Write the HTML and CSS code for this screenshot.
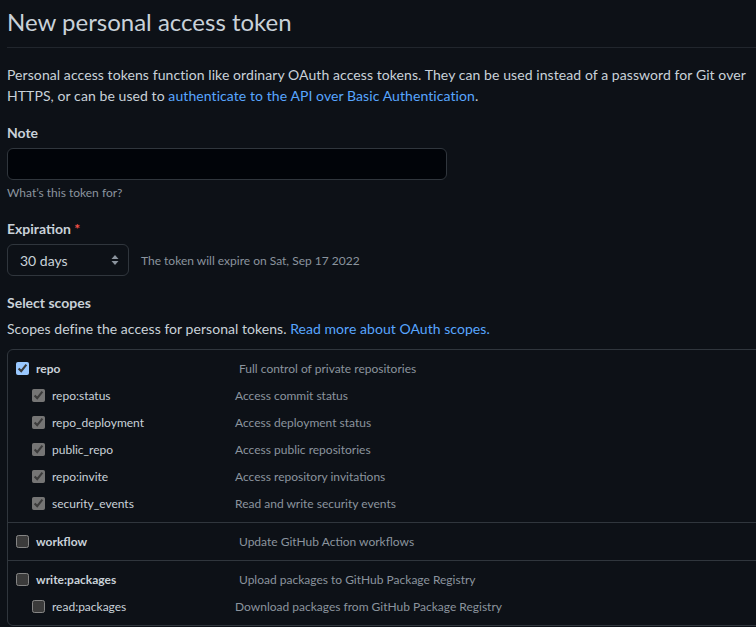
FILE: index.html
```html
<!DOCTYPE html>
<html lang="en">
<head>
    <meta charset="UTF-8">
    <meta name="viewport" content="width=device-width, initial-scale=1.0">
    <title>New personal access token</title>
    <link rel="stylesheet" href="styles.css">
</head>
<body>
    <div class="page">
        <h1 class="title">New personal access token</h1>
        <p class="intro">Personal access tokens function like ordinary OAuth access tokens. They can be used instead of a password for Git over HTTPS, or can be used to <a href="#">authenticate to the API over Basic Authentication</a>.</p>

        <div class="field">
            <label class="label" for="note">Note</label>
            <input class="text-input" type="text" id="note">
            <p class="hint">What’s this token for?</p>
        </div>

        <div class="field">
            <label class="label">Expiration <span class="req">*</span></label>
            <div class="expire-row">
                <div class="select">
                    <span>30 days</span>
                    <svg width="8" height="12" viewBox="0 0 8 12"><path d="M4 1 L7.5 5 H0.5 Z M4 11 L0.5 7 H7.5 Z" fill="#8b949e"/></svg>
                </div>
                <span class="expire-note">The token will expire on Sat, Sep 17 2022</span>
            </div>
        </div>

        <div class="field">
            <div class="label">Select scopes</div>
            <p class="scopes-intro">Scopes define the access for personal tokens. <a href="#">Read more about OAuth scopes.</a></p>
        </div>

        <div class="scopes">
            <div class="scope-group">
                <div class="scope top">
                    <label class="scope-name"><input type="checkbox" checked>repo</label>
                    <span class="scope-desc">Full control of private repositories</span>
                </div>
                <div class="scope sub">
                    <label class="scope-name"><input type="checkbox" checked disabled>repo:status</label>
                    <span class="scope-desc">Access commit status</span>
                </div>
                <div class="scope sub">
                    <label class="scope-name"><input type="checkbox" checked disabled>repo_deployment</label>
                    <span class="scope-desc">Access deployment status</span>
                </div>
                <div class="scope sub">
                    <label class="scope-name"><input type="checkbox" checked disabled>public_repo</label>
                    <span class="scope-desc">Access public repositories</span>
                </div>
                <div class="scope sub">
                    <label class="scope-name"><input type="checkbox" checked disabled>repo:invite</label>
                    <span class="scope-desc">Access repository invitations</span>
                </div>
                <div class="scope sub">
                    <label class="scope-name"><input type="checkbox" checked disabled>security_events</label>
                    <span class="scope-desc">Read and write security events</span>
                </div>
            </div>
            <div class="scope-group">
                <div class="scope top">
                    <label class="scope-name"><input type="checkbox">workflow</label>
                    <span class="scope-desc">Update GitHub Action workflows</span>
                </div>
            </div>
            <div class="scope-group">
                <div class="scope top">
                    <label class="scope-name"><input type="checkbox">write:packages</label>
                    <span class="scope-desc">Upload packages to GitHub Package Registry</span>
                </div>
                <div class="scope sub">
                    <label class="scope-name"><input type="checkbox">read:packages</label>
                    <span class="scope-desc">Download packages from GitHub Package Registry</span>
                </div>
            </div>
        </div>
    </div>
</body>
</html>
```

FILE: styles.css
```css
html {
    color-scheme: dark;
}
body {
    margin: 0;
    background-color: #0d1117;
    color: #c9d1d9;
    font-family: Lato, "Liberation Sans", sans-serif;
    font-size: 14px;
    line-height: 21px;
    overflow: hidden;
}
a {
    color: #58a6ff;
    text-decoration: none;
}
.page {
    width: 770px;
    padding-left: 7px;
}
.title {
    margin: 4px 0 0;
    padding-bottom: 7px;
    font-size: 24px;
    font-weight: 400;
    line-height: 36px;
    border-bottom: 1px solid #21262d;
}
.intro {
    margin: 16px 0 0;
    letter-spacing: 0.08px;
}
.field {
    margin-top: 16px;
}
.label {
    display: block;
    font-weight: 700;
    margin-bottom: 5px;
}
.req {
    color: #f85149;
}
.text-input {
    display: block;
    box-sizing: border-box;
    width: 440px;
    height: 32px;
    margin: 0;
    background-color: #010409;
    border: 1px solid #30363d;
    border-radius: 6px;
    color: #c9d1d9;
}
.hint {
    margin: 4px 0 0;
    font-size: 12px;
    line-height: 18px;
    color: #8b949e;
}
.expire-row {
    display: flex;
    align-items: center;
    gap: 12px;
}
.select {
    box-sizing: border-box;
    width: 122px;
    height: 32px;
    display: flex;
    align-items: center;
    justify-content: space-between;
    padding: 0 9px 0 12px;
    border: 1px solid #30363d;
    border-radius: 6px;
}
.expire-note {
    font-size: 12px;
    color: #8b949e;
}
.scopes-intro {
    margin: 0;
    letter-spacing: 0.05px;
}
.scopes {
    margin-top: 10px;
    border: 1px solid #30363d;
    border-radius: 6px;
}
.scope-group {
    padding: 5px 0;
}
.scope-group + .scope-group {
    border-top: 1px solid #30363d;
}
.scope {
    display: flex;
    align-items: center;
    height: 27px;
    font-size: 12px;
}
.scope-name {
    display: flex;
    align-items: center;
    gap: 7px;
}
.scope-name input {
    margin: 0;
}
.top .scope-name {
    width: 223px;
    margin-left: 8px;
    font-weight: 700;
}
.sub .scope-name {
    width: 203px;
    margin-left: 24px;
}
.scope-desc {
    color: #8b949e;
}
```
